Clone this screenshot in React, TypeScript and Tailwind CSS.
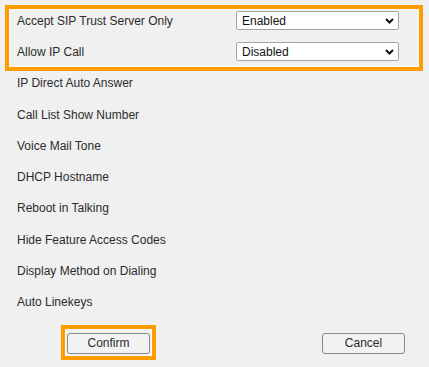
type Setting = {
  label: string;
  value?: string;
};

const settings: Setting[] = [
  { label: "Accept SIP Trust Server Only", value: "Enabled" },
  { label: "Allow IP Call", value: "Disabled" },
  { label: "IP Direct Auto Answer" },
  { label: "Call List Show Number" },
  { label: "Voice Mail Tone" },
  { label: "DHCP Hostname" },
  { label: "Reboot in Talking" },
  { label: "Hide Feature Access Codes" },
  { label: "Display Method on Dialing" },
  { label: "Auto Linekeys" },
];

export default function App() {
  return (
    <div
      className="relative w-[429px] h-[367px] bg-[#f0f0f0] text-[#2b2b2b] text-[12px] overflow-hidden"
      style={{ fontFamily: '"Liberation Sans", Arial, sans-serif' }}
    >
      <div className="pt-[5px]">
        {settings.map((s) => (
          <div key={s.label} className="h-[31.3px] flex items-center pl-[17px]">
            <span className="w-[219px] leading-none">{s.label}</span>
            {s.value && <FakeSelect value={s.value} />}
          </div>
        ))}
      </div>

      <div className="flex items-center pl-[67px] pr-[24px] mt-[15px]">
        <button className="w-[83px] h-[21px] border border-[#8a8a8a] rounded-[3px] bg-[#f2f2f2] leading-none">
          Confirm
        </button>
        <button className="ml-auto w-[83px] h-[21px] border border-[#8a8a8a] rounded-[3px] bg-[#f2f2f2] leading-none">
          Cancel
        </button>
      </div>

      {/* highlight marks */}
      <div className="absolute left-[5px] top-[5px] w-[418px] h-[66px] border-4 border-[#ff9d00] shadow-[inset_0_0_0_1px_#fbfbfb] pointer-events-none" />
      <div className="absolute left-[61px] top-[325px] w-[95px] h-[35px] border-4 border-[#ff9d00] shadow-[inset_0_0_0_1px_#fbfbfb] pointer-events-none" />
    </div>
  );
}

function FakeSelect({ value }: { value: string }) {
  return (
    <div className="w-[163px] h-[19px] flex items-center justify-between bg-white border border-[#a5a5a5] rounded-[2px] pl-[5px] pr-[4px]">
      <span className="leading-none text-[#111]">{value}</span>
      <svg width="9" height="6" viewBox="0 0 9 6">
        <path d="M1 1 L4.5 4.5 L8 1" fill="none" stroke="#111" strokeWidth="2" />
      </svg>
    </div>
  );
}
